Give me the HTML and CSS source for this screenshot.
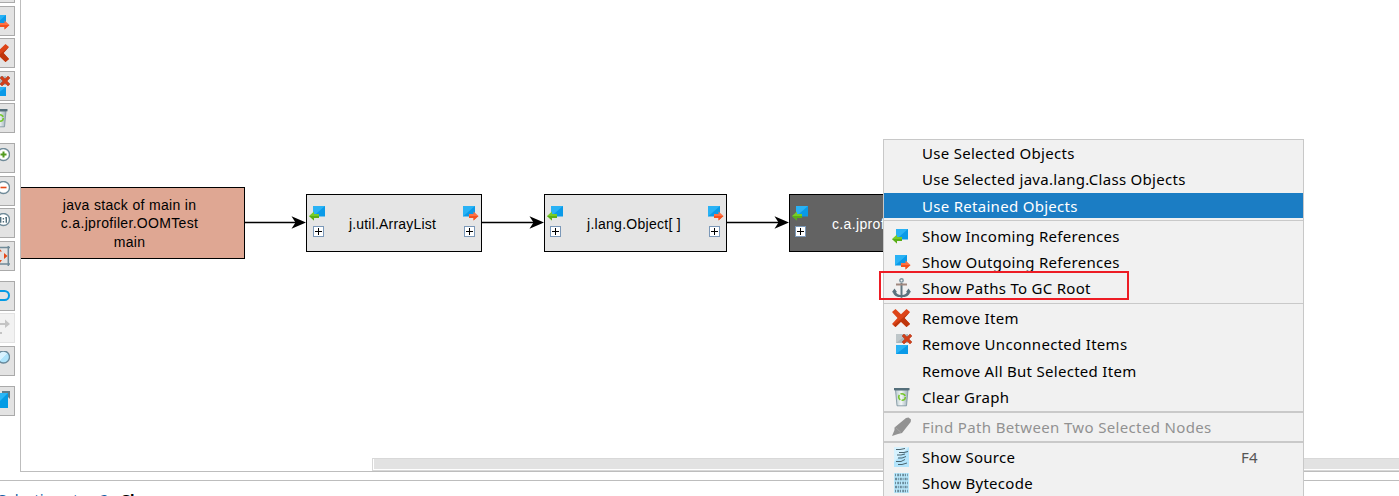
FILE: index.html
```
<!DOCTYPE html>
<html lang="en">
<head>
<meta charset="utf-8">
<title>Heap Walker</title>
<link rel="stylesheet" href="styles.css">
</head>
<body>
<svg class="defs" aria-hidden="true">
  <defs>
    <linearGradient id="pail" x1="0" x2="1"><stop offset="0" stop-color="#b9c9cf"/><stop offset=".45" stop-color="#f3f7f7"/><stop offset="1" stop-color="#9dafb8"/></linearGradient>
    <linearGradient id="lens" x1="0" y1="0" x2="1" y2="1"><stop offset=".5" stop-color="#d8f3ff"/><stop offset=".5" stop-color="#aee4fb"/></linearGradient>
  </defs>
  <symbol id="in" viewBox="0 0 20 20"><path fill="#0a9ae8" d="M4 0h12v10.500H4z"/><path fill="#29b2f5" d="M4 0h12L4 10.500z"/><path fill="#77cc28" d="M0 10l5-4.600V8h5v4H5v2.400z"/><path fill="#5aae18" d="M0 10h10v2H5v2.400z"/></symbol>
  <symbol id="out" viewBox="0 0 20 20"><path fill="#0a9ae8" d="M0 0h12v10.500H0z"/><path fill="#29b2f5" d="M0 0h12L0 10.500z"/><path fill="#ff7043" d="M15.500 10l-5-4.600V8H6v4h4.500v2.400z"/><path fill="#f4511e" d="M15.500 10H6v2h4.500v2.400z"/></symbol>
  <symbol id="cross" viewBox="0 0 20 20"><path fill="#dd4418" d="M0 4l3.500-3L9 6.200 14.500 1 18 4l-5.500 6 5.500 6-3.500 3L9 13.800 3.500 19 0 16l5.500-6z"/><path fill="#bf360c" d="M18 4l-5.500 6 5.500 6-3.500 3L9 13.800 3.500 19l-2-1.700z"/></symbol>
  <symbol id="unconnected" viewBox="0 0 20 20"><path fill="#aab5ba" d="M4 0h12v9H4z"/><path fill="#bec6c9" d="M4 0h12L4 9z"/><path fill="#0a9ae8" d="M4 11h12v9H4z"/><path fill="#29b2f5" d="M4 11h12L4 20z"/><path fill="#d2401a" stroke="#a93518" stroke-width=".5" d="M10 2l2-2 3 3 3-3 2 2-3 3 3 3-2 2-3-3-3 3-2-2 3-3z"/></symbol>
  <symbol id="bin" viewBox="0 0 20 20"><path fill="url(#pail)" stroke="#78909c" stroke-width=".8" d="M3.500 3h12.500L14.500 18.800H5z"/><path fill="#546e7a" d="M2 1h15.500v2.300H2z"/><circle cx="10" cy="10" r="3.300" fill="none" stroke="#76c72c" stroke-width="1.600" stroke-dasharray="5.500 1.300"/></symbol>
  <symbol id="plus" viewBox="0 0 20 20"><path stroke="#708b99" stroke-width="3" d="M8 13l-6 6"/><circle cx="13.500" cy="6.500" r="6" fill="#fff" stroke="#708b99" stroke-width="1.400"/><path stroke="#529a20" stroke-width="2" d="M13.500 3.500v6M10.500 6.500h6"/></symbol>
  <symbol id="minus" viewBox="0 0 20 20"><circle cx="13.500" cy="6.500" r="6" fill="#fff" stroke="#708b99" stroke-width="1.400"/><path stroke="#e64a19" stroke-width="1.600" d="M10.500 6.500h6"/></symbol>
  <symbol id="one" viewBox="0 0 20 20"><circle cx="13.500" cy="6.500" r="6" fill="#fff" stroke="#708b99" stroke-width="1.400"/><path fill="none" stroke="#506d7b" stroke-width="1.400" d="M9.700 4.700h1v5M15.300 4.700h1v5"/><path fill="#506d7b" d="M12.700 5h1.400v1.400h-1.400zM12.700 8h1.400v1.400h-1.400z"/></symbol>
  <symbol id="fit" viewBox="0 0 20 20"><path fill="none" stroke="#708b99" stroke-width="1.500" d="M1 1.500h19M1 18h19M18.300 0v20"/><path fill="#e64a19" d="M14 7v6l3.500-3zM9 2l3 3.500H8zM9 18l3-4H8z"/></symbol>
  <symbol id="loop" viewBox="0 0 20 20"><rect x="-3" y="5" width="22" height="9" rx="4.500" fill="none" stroke="#039be5" stroke-width="2"/></symbol>
  <symbol id="swap" viewBox="0 0 20 20"><path fill="#c4c4c4" d="M5 5h10V1.500l5 4.500-5 4V7H5zM0 14h12v2H0z"/></symbol>
  <symbol id="search" viewBox="0 0 20 20"><circle cx="13.500" cy="6" r="6" fill="url(#lens)" stroke="#68899b" stroke-width="1.300"/></symbol>
  <symbol id="export" viewBox="0 0 20 20"><path fill="#039be5" d="M0 2h18v15H0z"/><path fill="#29b6f6" d="M0 2h18L3 17H0z"/><path fill="#607d8b" d="M12 0h8v8l-2-2V2h-6z"/></symbol>
  <symbol id="anchor" viewBox="0 0 20 20"><path fill="none" stroke="#5f757f" stroke-width="2" d="M9.500 5v14"/><circle cx="9.500" cy="2.400" r="1.700" fill="none" stroke="#78909c" stroke-width="1.400"/><path stroke="#a1887f" stroke-width="2" d="M4 6.500h11"/><path fill="#5b727d" d="M0 14l2.500-3.500L5 14l-1 .3c1 2 2.700 2.700 4.500 2.700h2c1.800 0 3.500-.7 4.500-2.700l-1-.3 2.500-3.500L19 14l-1 .4c-1 3.600-4.500 4.600-7 4.600l-1.500 1L8 19c-2.500 0-6-1-7-4.600z"/></symbol>
  <symbol id="marker" viewBox="0 0 20 20"><path fill="#929292" d="M14 1l2.500-.5 2.500 2-.3 2.500L10 16l-4 1-6 2 2.500-6V10.500z"/><path stroke="#aaa" stroke-width=".8" d="M3.500 10.500l5.500 5"/></symbol>
  <symbol id="source" viewBox="0 0 20 20"><path fill="#b3e5fc" d="M2 0h15v20H2z"/><path fill="#d6f2fe" d="M2 0h15L2 15z"/><path fill="none" stroke="#4b6570" stroke-width="1" d="M4 2.500h4l5-1M7 5.500h5l4-1M5 8h4l4-1M6 11h4l4-1.500M4 14.500h5l4-2M6 17.500h4l5-1.500"/></symbol>
  <symbol id="bytes" viewBox="0 0 20 20"><path fill="#b9e8fc" d="M2 0h15v20H2z"/><g fill="none" stroke="#6b8c9c" stroke-width="2.300"><path stroke-dasharray="1 1.200 2 .8" d="M3 2h13M3 10h13M3 18h13"/><path stroke-dasharray="2 .8 1 1" d="M3 6h13M3 14h13"/></g></symbol>
</svg>

<main class="workspace">
  <nav class="toolbar">
    <div class="group">
      <span class="tool"></span>
      <span class="tool"><svg class="icon shift"><use href="#out"/></svg></span>
      <span class="tool"><svg class="icon"><use href="#cross" x="1"/></svg></span>
      <span class="tool"><svg class="icon"><use href="#unconnected"/></svg></span>
      <span class="tool"><svg class="icon"><use href="#bin"/></svg></span>
    </div>
    <div class="group">
      <span class="tool"><svg class="icon"><use href="#plus"/></svg></span>
      <span class="tool"><svg class="icon"><use href="#minus"/></svg></span>
      <span class="tool"><svg class="icon"><use href="#one"/></svg></span>
      <span class="tool"><svg class="icon"><use href="#fit"/></svg></span>
    </div>
    <div class="group">
      <span class="tool"><svg class="icon"><use href="#loop"/></svg></span>
      <span class="tool off"><svg class="icon"><use href="#swap"/></svg></span>
      <span class="tool"><svg class="icon"><use href="#search"/></svg></span>
    </div>
    <div class="group">
      <span class="tool"><svg class="icon"><use href="#export"/></svg></span>
    </div>
  </nav>

  <section class="graph">
    <div class="node root"><span>java stack of main in<br>c.a.jprofiler.OOMTest<br>main</span></div>
    <svg class="edges" viewBox="0 0 1378 471">
      <g stroke="#000" stroke-width="1.300"><path d="M224 222.500h52M461 222.500h53M706 222.500h53"/></g>
      <path d="M285 222.500l-14.500-6.200 4 6.200-4 6.200zM523 222.500l-14.500-6.200 4 6.200-4 6.200zM768 222.500l-14.500-6.200 4 6.200-4 6.200z"/>
    </svg>
    <div class="node list">
      <span class="port"><svg class="icon"><use href="#in"/></svg><i class="expand"></i></span>
      <span class="label">j.util.ArrayList</span>
      <span class="port end"><svg class="icon"><use href="#out"/></svg><i class="expand"></i></span>
    </div>
    <div class="node array">
      <span class="port"><svg class="icon"><use href="#in"/></svg><i class="expand"></i></span>
      <span class="label">j.lang.Object[ ]</span>
      <span class="port end"><svg class="icon"><use href="#out"/></svg><i class="expand"></i></span>
    </div>
    <div class="node selected">
      <span class="port"><svg class="icon"><use href="#in"/></svg><i class="expand"></i></span>
      <span class="label">c.a.jprofiler.OOM</span>
    </div>
    <div class="scrollbar"></div>
  </section>
</main>
<footer class="status"><span>Selection step 2 : </span><b>Class</b></footer>

<div class="menu">
  <div class="item"><span></span><span class="text">Use Selected Objects</span></div>
  <div class="item"><span></span><span class="text">Use Selected java.lang.Class Objects</span></div>
  <div class="item active"><span></span><span class="text">Use Retained Objects</span></div>
  <div class="rule"></div>
  <div class="item"><svg class="icon"><use href="#in" y="3"/></svg><span class="text">Show Incoming References</span></div>
  <div class="item"><svg class="icon"><use href="#out" x="3" y="3"/></svg><span class="text">Show Outgoing References</span></div>
  <div class="item"><svg class="icon"><use href="#anchor"/></svg><span class="text">Show Paths To GC Root</span></div>
  <div class="rule low"></div>
  <div class="item"><svg class="icon"><use href="#cross"/></svg><span class="text">Remove Item</span></div>
  <div class="item"><svg class="icon"><use href="#unconnected"/></svg><span class="text">Remove Unconnected Items</span></div>
  <div class="item"><span></span><span class="text">Remove All But Selected Item</span></div>
  <div class="item"><svg class="icon"><use href="#bin"/></svg><span class="text">Clear Graph</span></div>
  <div class="rule thick"></div>
  <div class="item disabled"><svg class="icon"><use href="#marker"/></svg><span class="text">Find Path Between Two Selected Nodes</span></div>
  <div class="rule thick"></div>
  <div class="item"><svg class="icon"><use href="#source"/></svg><span class="text">Show Source</span><span class="key">F4</span></div>
  <div class="item"><svg class="icon"><use href="#bytes"/></svg><span class="text">Show Bytecode</span></div>
</div>
<div class="highlight"></div>
</body>
</html>
```
FILE: styles.css
```
* { box-sizing: border-box; }
body { margin: 0; height: 496px; overflow: hidden; position: relative; background: #fff; font-family: "Liberation Sans", Arial, sans-serif; }
.defs { position: absolute; width: 0; height: 0; }
.icon { display: block; width: 20px; height: 20px; flex: none; overflow: visible; }
.icon use { width: 20px; height: 20px; }

.workspace { display: flex; height: 481px; border-bottom: 1px solid #bdbdbd; }
.toolbar { width: 20px; flex: none; margin-top: -27px; display: flex; flex-direction: column; gap: 10px; }
.group { display: flex; flex-direction: column; gap: 2.500px; }
.tool { width: 30px; height: 30px; margin-left: -15px; padding: 4px; border: 1px solid #aaa; background: #e3e3e3; }
.tool.off { border-color: #e2e2e2; background: #f2f2f2; }
.shift { transform: translate(4px, 4px); }

.graph { position: relative; flex: 1; height: 472px; border-left: 1px solid #bdbdbd; border-bottom: 1px solid #bdbdbd; overflow: hidden; }
.edges { position: absolute; left: 0; top: 0; width: 1378px; height: 471px; }
.node { position: absolute; top: 194px; height: 58px; border: 1px solid #000; background: #e5e5e5; display: flex; font-size: 14px; letter-spacing: .2px; color: #000; }
.root { left: -7px; top: 187px; width: 231px; height: 72px; background: #dfa793; align-items: center; justify-content: center; text-align: center; line-height: 18.500px; letter-spacing: .32px; }
.root span { padding-top: 1px; }
.list { left: 285px; width: 176px; }
.array { left: 523px; width: 183px; letter-spacing: .28px; }
.selected { left: 768px; width: 176px; background: #636363; color: #fff; }
.label { flex: 1; margin-right: 5px; text-align: center; line-height: 58px; white-space: nowrap; }
.selected .label { margin-left: 22px; text-align: left; letter-spacing: .35px; }
.port { width: 20px; flex: none; padding: 11px 0 0 2px; }
.expand { display: block; width: 11px; height: 11px; margin-left: 4px; border: 1px solid #7b98b8; background: linear-gradient(#000, #000) center / 7px 1px no-repeat, linear-gradient(#000, #000) center / 1px 7px no-repeat, #fff; }
.array .expand, .selected .expand { margin-left: 3px; }
.port.end { width: 18px; padding-left: 0; }
.port.end .expand { margin-left: 1px; }
.scrollbar { position: absolute; left: 351px; right: 0; bottom: 0; height: 13px; border: 1px solid #d8d8d8; border-right: 0; background: #e2e2e2; box-shadow: inset 1px -1px #fff; }

.status { height: 15px; padding-top: 8px; margin-left: -2px; font: 15px/20px "Noto Sans", sans-serif; color: #1260a5; white-space: nowrap; overflow: hidden; }
.status b { color: #000; }

.menu { position: absolute; left: 883px; top: 139px; width: 421px; height: 370px; border: 1px solid #c8c8c8; background: #f1f1f1; font: 15px/26px "Noto Sans", sans-serif; letter-spacing: .29px; color: #000; }
.item { display: grid; grid-template-columns: 20px 1fr 45px; column-gap: 10px; align-items: center; height: 26.200px; padding-left: 8px; white-space: nowrap; }
.item.active { color: #fff; padding-top: 1px; background: linear-gradient(#1b7dc4, #1b7dc4) 0 1px / 100% 25px no-repeat; }
.item.disabled { color: #919191; letter-spacing: .35px; }
.key { color: #555; margin-left: -17px; }
.rule { height: 4px; padding-top: 1px; }
.rule.low { padding-top: 2px; }
.rule::before { content: ""; display: block; height: 1px; background: #c9c9c9; }
.rule.thick::before { height: 2px; }
.highlight { position: absolute; left: 879px; top: 271px; width: 250px; height: 29px; border: 2px solid #ed1c24; }
```
